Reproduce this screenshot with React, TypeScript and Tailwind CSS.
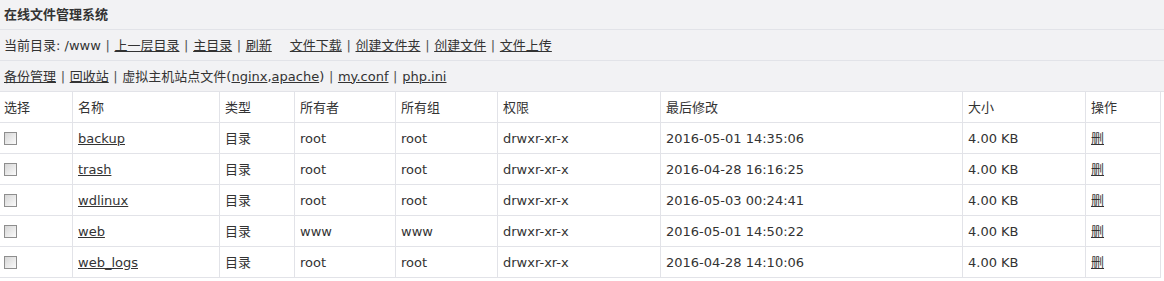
import React from 'react'

const files = [
  { name: 'backup', owner: 'root', group: 'root', mtime: '2016-05-01 14:35:06' },
  { name: 'trash', owner: 'root', group: 'root', mtime: '2016-04-28 16:16:25' },
  { name: 'wdlinux', owner: 'root', group: 'root', mtime: '2016-05-03 00:24:41' },
  { name: 'web', owner: 'www', group: 'www', mtime: '2016-05-01 14:50:22' },
  { name: 'web_logs', owner: 'root', group: 'root', mtime: '2016-04-28 14:10:06' }
]

const cols = 'grid grid-cols-[72px_147px_75px_101px_102px_163px_302px_123px_75px] w-[1161px] border-r border-b border-[#e2e3e8]'
const cell = 'h-[30px] flex items-center pl-[5px] pt-[1px] border-l border-[#e2e3e8]'

function Link({ children }: { children: React.ReactNode }) {
  return <a href="#" className="underline text-[#333]">{children}</a>
}

function Sep() {
  return <span className="text-[#555] mx-[0.5px]"> | </span>
}

function Box() {
  // 老式灰色复选框
  return (
    <span className="block w-[13px] h-[13px] border border-[#8e8e8e] bg-gradient-to-br from-[#d6d6d6] to-[#fbfbfb]" />
  )
}

export default function App() {
  return (
    <div
      className="w-[1164px] bg-white text-[13px] text-[#333]"
      style={{ fontFamily: '"DejaVu Sans", "Noto Sans CJK SC", sans-serif' }}
    >
      {/* 标题和工具栏 */}
      <div className="h-[30px] bg-[#f2f2f4] border-b border-[#e2e3e8] flex items-center pl-[4px] font-bold">
        在线文件管理系统
      </div>
      <div className="h-[31px] bg-[#f2f2f4] border-b border-[#e2e3e8] flex items-center pl-[4px] pt-[1px] whitespace-pre">
        <span>当前目录: /www</span>
        <Sep />
        <Link>上一层目录</Link>
        <Sep />
        <Link>主目录</Link>
        <Sep />
        <Link>刷新</Link>
        <span className="inline-block w-[18px]" />
        <Link>文件下载</Link>
        <Sep />
        <Link>创建文件夹</Link>
        <Sep />
        <Link>创建文件</Link>
        <Sep />
        <Link>文件上传</Link>
      </div>
      <div className="h-[31px] bg-[#f2f2f4] border-b border-[#e2e3e8] flex items-center pl-[4px] pt-[1px] whitespace-pre">
        <Link>备份管理</Link>
        <Sep />
        <Link>回收站</Link>
        <Sep />
        <span>虚拟主机站点文件(</span>
        <Link>nginx</Link>
        <span>,</span>
        <Link>apache</Link>
        <span>)</span>
        <Sep />
        <Link>my.conf</Link>
        <Sep />
        <Link>php.ini</Link>
      </div>

      {/* 文件列表 */}
      <div className={cols}>
        <div className="h-[30px] flex items-center pl-[4px] pt-[1px]">选择</div>
        <div className={cell}>名称</div>
        <div className={cell}>类型</div>
        <div className={cell}>所有者</div>
        <div className={cell}>所有组</div>
        <div className={cell}>权限</div>
        <div className={cell}>最后修改</div>
        <div className={cell}>大小</div>
        <div className={cell}>操作</div>
      </div>
      {files.map((f) => (
        <div key={f.name} className={cols}>
          <div className="h-[30px] flex items-center pl-[4px]">
            <Box />
          </div>
          <div className={cell}><Link>{f.name}</Link></div>
          <div className={cell}>目录</div>
          <div className={cell}>{f.owner}</div>
          <div className={cell}>{f.group}</div>
          <div className={cell}>drwxr-xr-x</div>
          <div className={cell}>{f.mtime}</div>
          <div className={cell}>4.00 KB</div>
          <div className={cell}><Link>删</Link></div>
        </div>
      ))}
    </div>
  )
}
